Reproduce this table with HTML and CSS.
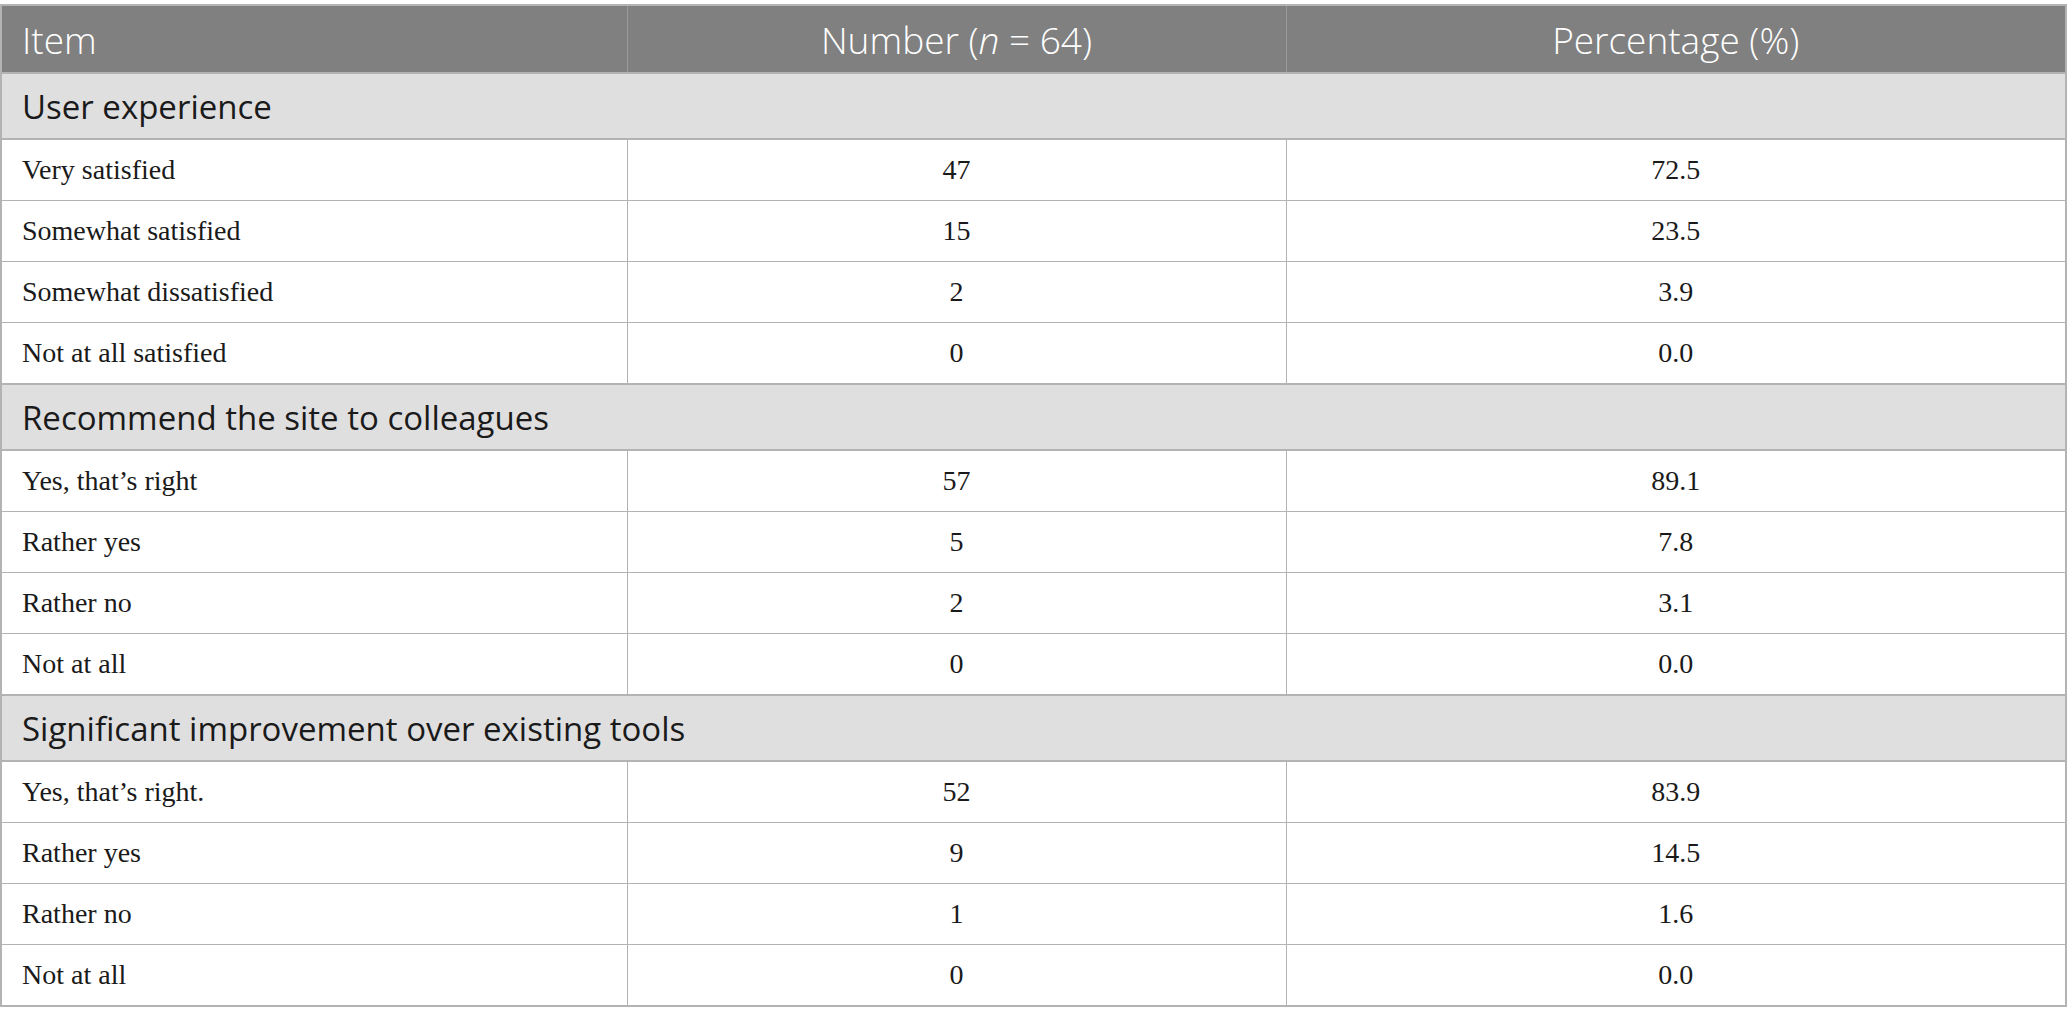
FILE: index.html
```html
<!DOCTYPE html>
<html>
<head>
<meta charset="utf-8">
<link rel="stylesheet" href="styles.css">
</head>
<body>
<table class="tbl">
  <colgroup>
    <col class="c1"><col class="c2"><col class="c3">
  </colgroup>
  <thead>
    <tr class="head">
      <th class="left">Item</th>
      <th>Number (<i>n</i> = 64)</th>
      <th>Percentage (%)</th>
    </tr>
  </thead>
  <tbody>
    <tr class="sec"><td colspan="3">User experience</td></tr>
    <tr><td>Very satisfied</td><td>47</td><td>72.5</td></tr>
    <tr><td>Somewhat satisfied</td><td>15</td><td>23.5</td></tr>
    <tr><td>Somewhat dissatisfied</td><td>2</td><td>3.9</td></tr>
    <tr><td>Not at all satisfied</td><td>0</td><td>0.0</td></tr>
    <tr class="sec"><td colspan="3">Recommend the site to colleagues</td></tr>
    <tr><td>Yes, that’s right</td><td>57</td><td>89.1</td></tr>
    <tr><td>Rather yes</td><td>5</td><td>7.8</td></tr>
    <tr><td>Rather no</td><td>2</td><td>3.1</td></tr>
    <tr><td>Not at all</td><td>0</td><td>0.0</td></tr>
    <tr class="sec"><td colspan="3">Significant improvement over existing tools</td></tr>
    <tr><td>Yes, that’s right.</td><td>52</td><td>83.9</td></tr>
    <tr><td>Rather yes</td><td>9</td><td>14.5</td></tr>
    <tr><td>Rather no</td><td>1</td><td>1.6</td></tr>
    <tr><td>Not at all</td><td>0</td><td>0.0</td></tr>
  </tbody>
</table>
</body>
</html>
```
FILE: styles.css
```css
html, body {
  margin: 0;
  padding: 0;
  background: #ffffff;
}
body {
  padding-top: 4px;
}
.tbl {
  border-collapse: collapse;
  width: 2065px;
  table-layout: fixed;
  border: 2px solid #b3b3b3;
}
.c1 { width: 626px; }
.c2 { width: 659px; }
.c3 { width: 780px; }
.head th {
  background: #7f807f;
  color: #ffffff;
  font-family: "Open Sans", "Lato", sans-serif;
  font-weight: 300;
  font-size: 37px;
  height: 66px;
  padding: 0 20px;
  text-align: center;
  border-left: 1px solid #9a9a9a;
  border-bottom: 2px solid #b3b3b3;
}
.head th.left { text-align: left; border-left: none; }
.head i { font-style: italic; }
.sec td {
  background: #e0dfe0;
  color: #1a1a1a;
  font-family: "Open Sans", "Lato", sans-serif;
  font-size: 33px;
  height: 64px;
  padding: 0 20px;
  text-align: left;
  border-top: 2px solid #b3b3b3;
  border-bottom: 2px solid #b3b3b3;
}
tbody td {
  font-family: "Liberation Serif", "DejaVu Serif", serif;
  font-size: 28px;
  color: #1a1a1a;
  height: 60px;
  padding: 0 20px;
  text-align: center;
  border: 1px solid #b3b3b3;
}
tbody td:first-child { text-align: left; }
```
